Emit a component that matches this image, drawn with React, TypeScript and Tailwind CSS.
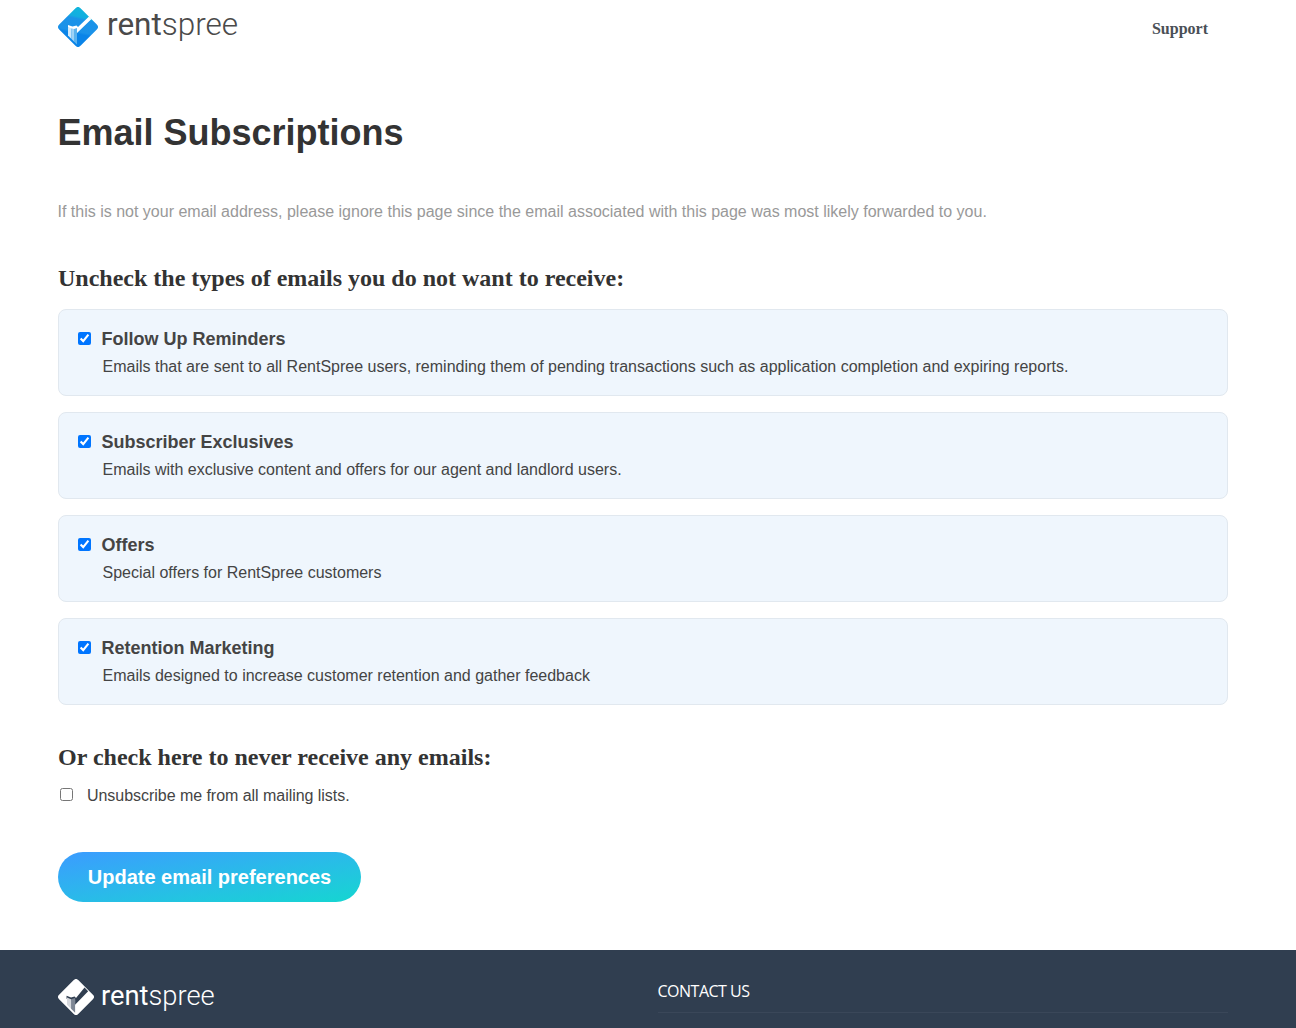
import React from "react";

const MarkHeader = () => (
  <svg width={40} height={40} viewBox="0 0 40 40" className="shrink-0">
    <defs>
      <linearGradient id="mh" x1="0.62" y1="0.02" x2="0.42" y2="0.98">
        <stop offset="0" stopColor="#10b5dc" />
        <stop offset="0.24" stopColor="#12aee0" />
        <stop offset="0.3" stopColor="#1b93e8" />
        <stop offset="0.62" stopColor="#1a92e9" />
        <stop offset="0.68" stopColor="#0a84e8" />
        <stop offset="1" stopColor="#0a84e8" />
      </linearGradient>
    </defs>
    <path d="M17.5 1.2 a3.5 3.5 0 0 1 5 0 L38.8 17.5 a3.5 3.5 0 0 1 0 5 L22.5 38.8 a3.5 3.5 0 0 1 -5 0 L1.2 22.5 a3.5 3.5 0 0 1 0 -5 Z" fill="url(#mh)" />
    <path d="M10 18 L14.5 19.5 L18.5 18.5 L20 20 L31 9.5 L33.5 12 L19 26 L19 22 L14 22 L10 20.5 Z" fill="#ffffff" />
    <path d="M10 20 L13.5 21.2 L13.5 32 L10 28.5 Z" fill="#cfe9fb" />
    <path d="M13.5 21.2 L16 22 L16 34.5 L13.5 32 Z" fill="#9ed3f6" />
    <path d="M16 22 L19 21 L19 37.5 L16 34.5 Z" fill="#5cb3ee" />
  </svg>
);

const MarkFooter = () => (
  <svg width={36} height={36} viewBox="0 0 40 40" className="shrink-0">
    <path d="M17.5 1.2 a3.5 3.5 0 0 1 5 0 L38.8 17.5 a3.5 3.5 0 0 1 0 5 L22.5 38.8 a3.5 3.5 0 0 1 -5 0 L1.2 22.5 a3.5 3.5 0 0 1 0 -5 Z" fill="#ffffff" />
    <path d="M9.5 18.5 L14.5 20.5 L18.5 19.5 L20 21 L29.5 9.5 L33.5 13.5 L19 28.5 L19 23 L15 24 L9.5 22 Z" fill="#303e50" />
    <path d="M10 20.5 L14.5 22.5 L14.5 33 L10 28.5 Z" fill="#d5d8dd" />
    <path d="M14.5 22.5 L19 21 L19 37.5 L14.5 33 Z" fill="#7d8694" />
  </svg>
);

const items = [
  ["Follow Up Reminders", "Emails that are sent to all RentSpree users, reminding them of pending transactions such as application completion and expiring reports."],
  ["Subscriber Exclusives", "Emails with exclusive content and offers for our agent and landlord users."],
  ["Offers", "Special offers for RentSpree customers"],
  ["Retention Marketing", "Emails designed to increase customer retention and gather feedback"],
];

export default function App() {
  return (
    <div className="w-[1296px] h-[1028px] overflow-hidden bg-white font-['Liberation_Sans',sans-serif] text-[#333]">
      <header className="flex justify-between h-[58px] pl-[58px] pr-[88px]">
        <div className="flex items-start pt-[7px]">
          <MarkHeader />
          <div className="ml-[9px] -mt-[1px] text-[31.5px] leading-[38px] font-['Roboto',sans-serif] text-[#4a4a4a]">
            <span className="font-normal">rent</span><span className="font-light">spree</span>
          </div>
        </div>
        <a className="mt-[20px] text-[16px] leading-[18px] font-bold font-['Liberation_Serif',serif] text-[#4a5057]">Support</a>
      </header>
      <main className="pl-[58px] pr-[68px]">
        <h1 className="mt-[53px] text-[36px] leading-[44px] font-bold -ml-[0.5px]">Email Subscriptions</h1>
        <p className="mt-[46px] text-[16px] leading-[22px] text-[#999] -ml-[0.5px]">If this is not your email address, please ignore this page since the email associated with this page was most likely forwarded to you.</p>
        <h2 className="mt-[40px] text-[24px] leading-[30px] font-bold font-['Liberation_Serif',serif]">Uncheck the types of emails you do not want to receive:</h2>
        <div className="mt-[16px] flex flex-col gap-[16px]">
          {items.map(([t, d]) => (
            <div key={t} className="h-[87px] rounded-[8px] border border-[#e1e8ef] bg-[#eff6fd] pl-[19px] pt-[17px]">
              <label className="flex items-center h-[24px]">
                <input type="checkbox" defaultChecked className="m-0 w-[13px] h-[13px] -mt-[1px]" />
                <span className="ml-[10.5px] text-[18px] leading-[24px] font-bold text-[#444]">{t}</span>
              </label>
              <p className="mt-[4px] ml-[24.5px] text-[16px] leading-[24px] text-[#444]">{d}</p>
            </div>
          ))}
        </div>
        <h2 className="mt-[37px] text-[24px] leading-[30px] font-bold font-['Liberation_Serif',serif]">Or check here to never receive any emails:</h2>
        <label className="mt-[12px] flex items-center h-[24px] pl-[2px]">
          <input type="checkbox" className="m-0 w-[13px] h-[13px] -mt-[3px]" />
          <span className="ml-[14px] text-[16px] leading-[24px] text-[#444] tracking-[-0.04px]">Unsubscribe me from all mailing lists.</span>
        </label>
        <button className="mt-[44px] block w-[303px] h-[50px] rounded-full bg-linear-to-br from-[#3b9bff] to-[#14d6d0] text-white text-[20px] font-bold">Update email preferences</button>
      </main>
      <footer className="mt-[48px] h-[78px] bg-[#303e50] flex pl-[58px]">
        <div className="w-[600px] flex items-start pt-[29px]">
          <MarkFooter />
          <div className="ml-[7px] mt-[1px] text-[27.3px] leading-[32px] font-['Roboto',sans-serif] text-white">
            <span className="font-normal">rent</span><span className="font-light">spree</span>
          </div>
        </div>
        <div className="w-[570px] pt-[30px]">
          <div className="h-[33px] border-b border-[#3a4759] text-[16px] leading-[22px] text-white font-['Open_Sans',sans-serif] tracking-[-0.5px]"><span className="block -ml-[0.5px]">CONTACT US</span></div>
        </div>
      </footer>
    </div>
  );
}
